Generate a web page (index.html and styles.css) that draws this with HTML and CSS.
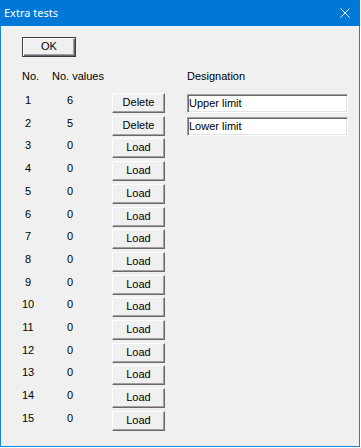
FILE: index.html
```html
<!DOCTYPE html>
<html>
<head>
<meta charset="utf-8">
<link rel="stylesheet" href="styles.css">
</head>
<body>
<div class="window">
  <div class="titlebar">
    <span class="title">Extra tests</span>
    <svg class="close" width="10" height="10" viewBox="0 0 10 10"><path d="M0.5 0.5 L9.5 9.5 M9.5 0.5 L0.5 9.5" stroke="#fff" stroke-width="1" fill="none"/></svg>
  </div>
  <div class="content">
    <button class="btn btn-default">OK</button>
    <div class="grid">
      <div class="head">No.</div>
      <div class="head">No. values</div>
      <div class="head"></div>
      <div class="head">Designation</div>

      <div class="cell"><span class="num">1</span></div><div class="cell"><span class="val">6</span></div><div class="cell"><button class="btn">Delete</button></div><div class="cell"><div class="field">Upper limit</div></div>
      <div class="cell"><span class="num">2</span></div><div class="cell"><span class="val">5</span></div><div class="cell"><button class="btn">Delete</button></div><div class="cell"><div class="field">Lower limit</div></div>
      <div class="cell"><span class="num">3</span></div><div class="cell"><span class="val">0</span></div><div class="cell"><button class="btn">Load</button></div><div class="cell"></div>
      <div class="cell"><span class="num">4</span></div><div class="cell"><span class="val">0</span></div><div class="cell"><button class="btn">Load</button></div><div class="cell"></div>
      <div class="cell"><span class="num">5</span></div><div class="cell"><span class="val">0</span></div><div class="cell"><button class="btn">Load</button></div><div class="cell"></div>
      <div class="cell"><span class="num">6</span></div><div class="cell"><span class="val">0</span></div><div class="cell"><button class="btn">Load</button></div><div class="cell"></div>
      <div class="cell"><span class="num">7</span></div><div class="cell"><span class="val">0</span></div><div class="cell"><button class="btn">Load</button></div><div class="cell"></div>
      <div class="cell"><span class="num">8</span></div><div class="cell"><span class="val">0</span></div><div class="cell"><button class="btn">Load</button></div><div class="cell"></div>
      <div class="cell"><span class="num">9</span></div><div class="cell"><span class="val">0</span></div><div class="cell"><button class="btn">Load</button></div><div class="cell"></div>
      <div class="cell"><span class="num">10</span></div><div class="cell"><span class="val">0</span></div><div class="cell"><button class="btn">Load</button></div><div class="cell"></div>
      <div class="cell"><span class="num">11</span></div><div class="cell"><span class="val">0</span></div><div class="cell"><button class="btn">Load</button></div><div class="cell"></div>
      <div class="cell"><span class="num">12</span></div><div class="cell"><span class="val">0</span></div><div class="cell"><button class="btn">Load</button></div><div class="cell"></div>
      <div class="cell"><span class="num">13</span></div><div class="cell"><span class="val">0</span></div><div class="cell"><button class="btn">Load</button></div><div class="cell"></div>
      <div class="cell"><span class="num">14</span></div><div class="cell"><span class="val">0</span></div><div class="cell"><button class="btn">Load</button></div><div class="cell"></div>
      <div class="cell"><span class="num">15</span></div><div class="cell"><span class="val">0</span></div><div class="cell"><button class="btn">Load</button></div><div class="cell"></div>
    </div>
  </div>
</div>
</body>
</html>
```
FILE: styles.css
```css
html, body {
  margin: 0;
  padding: 0;
  background: #ffffff;
}
.window {
  width: 360px;
  height: 447px;
  box-sizing: border-box;
  border: 1px solid #1a82d8;
  border-top: none;
  background: #f0f0f0;
  display: flex;
  flex-direction: column;
}
.titlebar {
  height: 26px;
  flex: none;
  background: #0078d7;
  display: flex;
  align-items: center;
  justify-content: space-between;
  padding-left: 4px;
  margin: 0 -1px;
  padding-right: 10px;
}
.title {
  font-family: "Noto Sans", "Open Sans", sans-serif;
  font-size: 11px;
  line-height: 26px;
  color: #ffffff;
}
.close {
  display: block;
}
.content {
  flex: 1;
  padding: 11px 0 0 21px;
  font-family: "Liberation Sans", Arial, sans-serif;
  font-size: 11px;
  color: #000;
}
.btn {
  display: block;
  box-sizing: border-box;
  width: 53px;
  height: 20px;
  margin: 0;
  padding: 0 0 2px 0;
  font-family: "Liberation Sans", Arial, sans-serif;
  font-size: 11px;
  line-height: 16px;
  color: #000;
  background: #f0f0f0;
  border-style: solid;
  border-width: 1px;
  border-color: #ffffff #696969 #696969 #ffffff;
  box-shadow: inset -1px -1px 0 #a0a0a0;
  border-radius: 0;
}
.btn-default {
  width: 54px;
  border-color: #3c3c3c;
  box-shadow: inset 1px 1px 0 #ffffff, inset -1px -1px 0 #696969, inset -2px -2px 0 #a0a0a0;
}
.grid {
  display: grid;
  grid-template-columns: 30px 60px 75px 161px;
  grid-template-rows: 33.29px;
  grid-auto-rows: 20px;
  row-gap: 2.714px;
}
.head {
  padding-top: 12px;
  line-height: 14px;
  white-space: nowrap;
}
.cell {
  line-height: 14px;
}
.num {
  display: inline-block;
  width: 12px;
  text-align: center;
}
.val {
  display: inline-block;
  width: 36px;
  text-align: center;
}
.field {
  box-sizing: border-box;
  width: 161px;
  height: 19px;
  margin-top: 1px;
  padding: 1px 0 0 1px;
  line-height: 15px;
  background: #ffffff;
  border-style: solid;
  border-width: 1px;
  border-color: #a0a0a0 #ffffff #ffffff #a0a0a0;
  box-shadow: inset 1px 1px 0 #696969, inset -1px -1px 0 #e3e3e3;
  white-space: nowrap;
}
```
